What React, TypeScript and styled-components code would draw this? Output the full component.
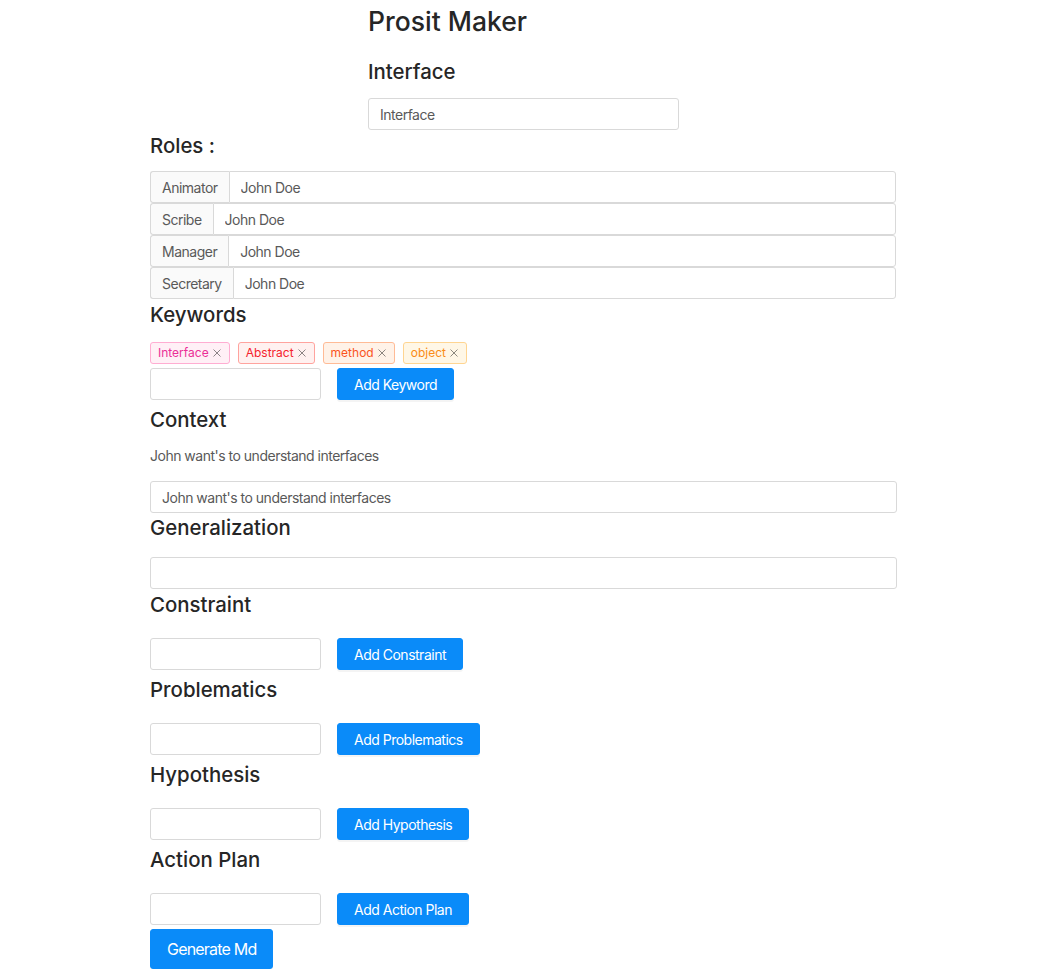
import React from "react";
import styled, { createGlobalStyle } from "styled-components";

const Global = createGlobalStyle`
  html, body { margin: 0; padding: 0; background: #fff; }
  body {
    font-family: Inter, "Noto Sans", "Liberation Sans", sans-serif;
    color: rgba(0,0,0,0.85);
    font-size: 14px;
  }
  * { box-sizing: border-box; }
`;

const Page = styled.div`
  width: 747px;
  margin-left: 150px;
  display: flex;
  flex-direction: column;
`;

const Header = styled.div`
  width: 311px;
  margin: 0 auto;
  display: flex;
  flex-direction: column;
`;

const Title = styled.h1`
  margin: 0;
  font-size: 26.5px;
  line-height: 42px;
  font-weight: 500;
  color: #262626;
`;

const Heading = styled.h3<{ $top: number; $bottom: number }>`
  margin: ${(p) => p.$top}px 0 ${(p) => p.$bottom}px;
  font-size: 20.4px;
  line-height: 28px;
  font-weight: 500;
  color: #262626;
`;

const TextInput = styled.input<{ $width?: number }>`
  width: ${(p) => (p.$width ? `${p.$width}px` : "100%")};
  height: 32px;
  padding: 4px 11px;
  border: 1px solid #d9d9d9;
  border-radius: 3px;
  font-family: inherit;
  font-size: 14px;
  letter-spacing: -0.5px;
  color: #595959;
  background: #fff;
  outline: none;
`;

const RoleList = styled.div`
  margin-top: 11px;
  display: flex;
  flex-direction: column;
  width: 746px;
`;

const RoleRow = styled.div`
  display: flex;
  height: 32px;
`;

const Addon = styled.span`
  display: flex;
  align-items: center;
  padding: 0 11px;
  background: #fafafa;
  border: 1px solid #d9d9d9;
  border-right: none;
  border-radius: 3px 0 0 3px;
  color: #595959;
  font-size: 14px;
  letter-spacing: -0.5px;
  white-space: nowrap;
`;

const RoleInput = styled(TextInput)`
  flex: 1;
  border-radius: 0 3px 3px 0;
`;

const TagRow = styled.div`
  margin-top: 13px;
  display: flex;
  gap: 8px;
`;

const tagColors = {
  magenta: { fg: "#eb2f96", bg: "#fff0f6", bd: "#ffadd2" },
  red: { fg: "#f5222d", bg: "#fff1f0", bd: "#ffa39e" },
  volcano: { fg: "#fa541c", bg: "#fff2e8", bd: "#ffbb96" },
  orange: { fg: "#fa8c16", bg: "#fff7e6", bd: "#ffd591" },
};
type TagColor = keyof typeof tagColors;

const Tag = styled.span<{ $c: TagColor }>`
  display: inline-flex;
  align-items: center;
  height: 22px;
  padding: 0 7px;
  font-size: 12px;
  line-height: 20px;
  border-radius: 3px;
  color: ${(p) => tagColors[p.$c].fg};
  background: ${(p) => tagColors[p.$c].bg};
  border: 1px solid ${(p) => tagColors[p.$c].bd};
`;

const Close = styled.span`
  margin-left: 3px;
  display: inline-flex;
  color: rgba(0, 0, 0, 0.45);
`;

const AddRow = styled.div<{ $top: number }>`
  margin-top: ${(p) => p.$top}px;
  display: flex;
  gap: 16px;
`;

const Button = styled.button<{ $large?: boolean }>`
  height: ${(p) => (p.$large ? 40 : 32)}px;
  padding: 0 16px;
  font-family: inherit;
  font-size: ${(p) => (p.$large ? 16 : 14)}px;
  letter-spacing: ${(p) => (p.$large ? -0.8 : -0.5)}px;
  color: #fff;
  background: #0a8bf9;
  border: 1px solid #0a8bf9;
  border-radius: 3px;
  box-shadow: 0 2px 0 rgba(0, 0, 0, 0.045);
  cursor: pointer;
  white-space: nowrap;
`;

const GenerateButton = styled(Button)`
  align-self: flex-start;
  margin-top: 4px;
`;

const Paragraph = styled.p`
  margin: 11px 0 14px;
  font-size: 14px;
  line-height: 22px;
  letter-spacing: -0.5px;
  color: #595959;
`;

const CloseIcon = () => (
  <svg width="10" height="10" viewBox="0 0 10 10" fill="none" stroke="currentColor" strokeWidth="1">
    <path d="M1.5 1.5l7 7M8.5 1.5l-7 7" />
  </svg>
);

const roles = ["Animator", "Scribe", "Manager", "Secretary"];
const keywords: { label: string; color: TagColor }[] = [
  { label: "Interface", color: "magenta" },
  { label: "Abstract", color: "red" },
  { label: "method", color: "volcano" },
  { label: "object", color: "orange" },
];

const listSections = ["Constraint", "Problematics", "Hypothesis", "Action Plan"];

export default function App() {
  return (
    <>
      <Global />
      <Page>
        <Header>
          <Title>Prosit Maker</Title>
          <Heading $top={16} $bottom={12}>Interface</Heading>
          <TextInput defaultValue="Interface" />
        </Header>

        <Heading $top={2} $bottom={0}>Roles :</Heading>
        <RoleList>
          {roles.map((r) => (
            <RoleRow key={r}>
              <Addon>{r}</Addon>
              <RoleInput defaultValue="John Doe" />
            </RoleRow>
          ))}
        </RoleList>

        <Heading $top={2} $bottom={0}>Keywords</Heading>
        <TagRow>
          {keywords.map((k) => (
            <Tag key={k.label} $c={k.color}>
              {k.label}
              <Close>
                <CloseIcon />
              </Close>
            </Tag>
          ))}
        </TagRow>
        <AddRow $top={4}>
          <TextInput $width={171} />
          <Button>Add Keyword</Button>
        </AddRow>

        <Heading $top={6} $bottom={0}>Context</Heading>
        <Paragraph>John want's to understand interfaces</Paragraph>
        <TextInput defaultValue="John want's to understand interfaces" />

        <Heading $top={1} $bottom={15}>Generalization</Heading>
        <TextInput />

        {listSections.map((s, i) => (
          <React.Fragment key={s}>
            <Heading $top={i === 0 ? 2 : 6} $bottom={0}>{s}</Heading>
            <AddRow $top={19}>
              <TextInput $width={171} />
              <Button>Add {s}</Button>
            </AddRow>
          </React.Fragment>
        ))}

        <GenerateButton $large>Generate Md</GenerateButton>
      </Page>
    </>
  );
}
